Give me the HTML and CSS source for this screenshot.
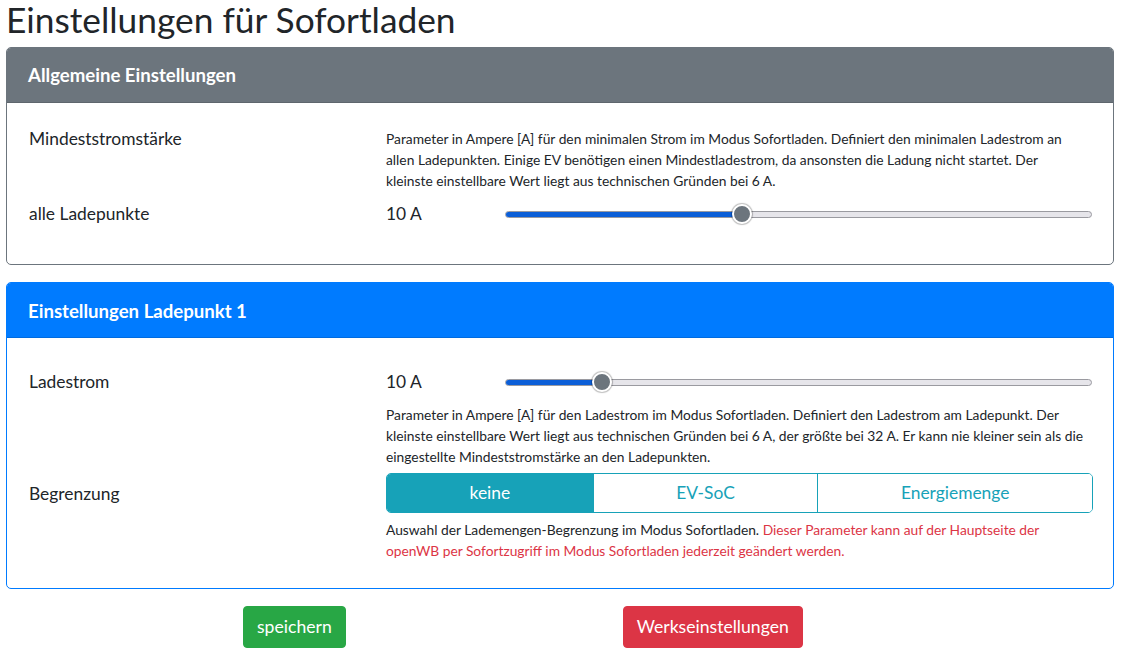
FILE: index.html
```html
<!DOCTYPE html>
<html lang="de">
<head>
<meta charset="utf-8">
<title>Einstellungen für Sofortladen</title>
<link rel="stylesheet" href="styles.css">
</head>
<body>
<div class="page">
  <h1 class="title">Einstellungen für Sofortladen</h1>

  <section class="card card-secondary">
    <header class="card-header">Allgemeine Einstellungen</header>
    <div class="card-body card-body-first">
      <div class="form-row">
        <div class="label label-top">Mindeststromstärke</div>
        <div class="field">
          <p class="help help-narrow">Parameter in Ampere [A] für den minimalen Strom im Modus Sofortladen. Definiert den minimalen Ladestrom an allen Ladepunkten. Einige EV benötigen einen Mindestladestrom, da ansonsten die Ladung nicht startet. Der kleinste einstellbare Wert liegt aus technischen Gründen bei 6 A.</p>
        </div>
      </div>
      <div class="form-row row-gap">
        <div class="label label-mid">alle Ladepunkte</div>
        <div class="slider-row">
          <span class="value">10 A</span>
          <div class="range">
            <div class="track">
              <div class="fill" style="width: calc(9px + 0.4 * (100% - 18px));"></div>
            </div>
            <div class="thumb" style="left: calc(0.4 * (100% - 18px));"></div>
          </div>
        </div>
      </div>
    </div>
  </section>

  <section class="card card-primary">
    <header class="card-header">Einstellungen Ladepunkt 1</header>
    <div class="card-body card-body-second">
      <div class="form-row">
        <div class="label label-mid">Ladestrom</div>
        <div class="field">
          <div class="slider-row">
            <span class="value">10 A</span>
            <div class="range">
              <div class="track">
                <div class="fill" style="width: calc(9px + 0.1538 * (100% - 18px));"></div>
              </div>
              <div class="thumb" style="left: calc(0.1538 * (100% - 18px));"></div>
            </div>
          </div>
          <p class="help help-below">Parameter in Ampere [A] für den Ladestrom im Modus Sofortladen. Definiert den Ladestrom am Ladepunkt. Der kleinste einstellbare Wert liegt aus technischen Gründen bei 6 A, der größte bei 32 A. Er kann nie kleiner sein als die eingestellte Mindeststromstärke an den Ladepunkten.</p>
        </div>
      </div>
      <div class="form-row row-gap-btn">
        <div class="label label-group">Begrenzung</div>
        <div class="field">
          <div class="btn-group">
            <button class="seg active">keine</button>
            <button class="seg">EV-SoC</button>
            <button class="seg">Energiemenge</button>
          </div>
          <p class="help help-below2">Auswahl der Lademengen-Begrenzung im Modus Sofortladen. <span class="danger">Dieser Parameter kann auf der Hauptseite der openWB per Sofortzugriff im Modus Sofortladen jederzeit geändert werden.</span></p>
        </div>
      </div>
    </div>
  </section>

  <div class="actions">
    <button class="btn btn-success">speichern</button>
    <button class="btn btn-danger">Werkseinstellungen</button>
  </div>
</div>
</body>
</html>
```

FILE: styles.css
```css
* { box-sizing: border-box; }

html, body {
  margin: 0;
  padding: 0;
  background: #ffffff;
}

body {
  font-family: "Lato", "Noto Sans", sans-serif;
  font-size: 17.4px;
  line-height: 24px;
  color: #212529;
}

.page {
  padding: 0 8px 0 6px;
}

.title {
  font-size: 35.3px;
  font-weight: 400;
  line-height: 39px;
  margin: 0 0 8px 0;
  color: #212529;
}

.card {
  border: 1px solid #6c757d;
  border-radius: 5px;
  overflow: hidden;
}

.card-secondary { border-color: #6c757d; }
.card-primary { border-color: #007bff; margin-top: 17px; }

.card-header {
  padding: 15px 21px 15px;
  font-weight: 700;
  font-size: 18.6px;
  line-height: 24px;
  color: #ffffff;
  border-bottom: 1px solid rgba(0, 0, 0, 0.125);
}

.card-secondary .card-header { background: #6c757d; }
.card-primary .card-header {
  background: #007bff;
  padding-top: 16px;
  padding-bottom: 14px;
}

.card-body {
  padding: 25px 20px 31px 20px;
}

.card-body-second {
  padding-top: 25px;
  padding-bottom: 27px;
}

.form-row {
  display: grid;
  grid-template-columns: 359px 1fr;
}

.row-gap { margin-top: 4px; }
.row-gap-btn { margin-top: 6px; }

.label {
  padding-left: 2px;
}

.label-top { margin-top: -1px; }

.label-mid {
  line-height: 38px;
}

.label-group {
  line-height: 41px;
}

.help {
  margin: 0;
  font-size: 13.8px;
  line-height: 21px;
}

.help-narrow { max-width: 692px; }

.help-below { margin-top: 3px; }
.help-below2 { margin-top: 6px; }

.danger { color: #dc3545; }

.slider-row {
  display: grid;
  grid-template-columns: 119px 1fr;
  align-items: center;
  height: 38px;
}

.value {
  font-size: 17.4px;
}

.range {
  position: relative;
  height: 20px;
  display: flex;
  align-items: center;
  margin-right: 1px;
}

.track {
  width: 100%;
  height: 7px;
  border-radius: 4px;
  background: #e6e5ea;
  border: 1px solid #9a9aa0;
  overflow: hidden;
}

.fill {
  height: 100%;
  background: #0b5ed7;
}

.thumb {
  position: absolute;
  top: 0;
  width: 20px;
  height: 20px;
  margin-left: -1px;
  border-radius: 50%;
  background: #6c757d;
  border: 2px solid #ffffff;
  box-shadow: 0 0 1px 1px rgba(0, 0, 0, 0.25);
}

.btn-group {
  display: flex;
  height: 40px;
  border: 1px solid #17a2b8;
  border-radius: 5px;
  overflow: hidden;
}

.seg {
  flex: 1 1 auto;
  font-family: inherit;
  font-size: 17.4px;
  line-height: 24px;
  padding: 0 12px;
  border: 0;
  border-left: 1px solid #17a2b8;
  background: #ffffff;
  color: #17a2b8;
}

.seg:first-child { border-left: 0; }

.seg.active {
  background: #17a2b8;
  color: #ffffff;
}

.actions {
  display: flex;
  gap: 277px;
  padding-left: 237px;
  margin-top: 17px;
}

.btn {
  font-family: inherit;
  font-size: 17.6px;
  line-height: 24px;
  padding: 8px 13px;
  border: 1px solid transparent;
  border-radius: 4px;
  color: #ffffff;
}

.btn-success { background: #28a745; border-color: #28a745; }
.btn-danger { background: #dc3545; border-color: #dc3545; }
```
